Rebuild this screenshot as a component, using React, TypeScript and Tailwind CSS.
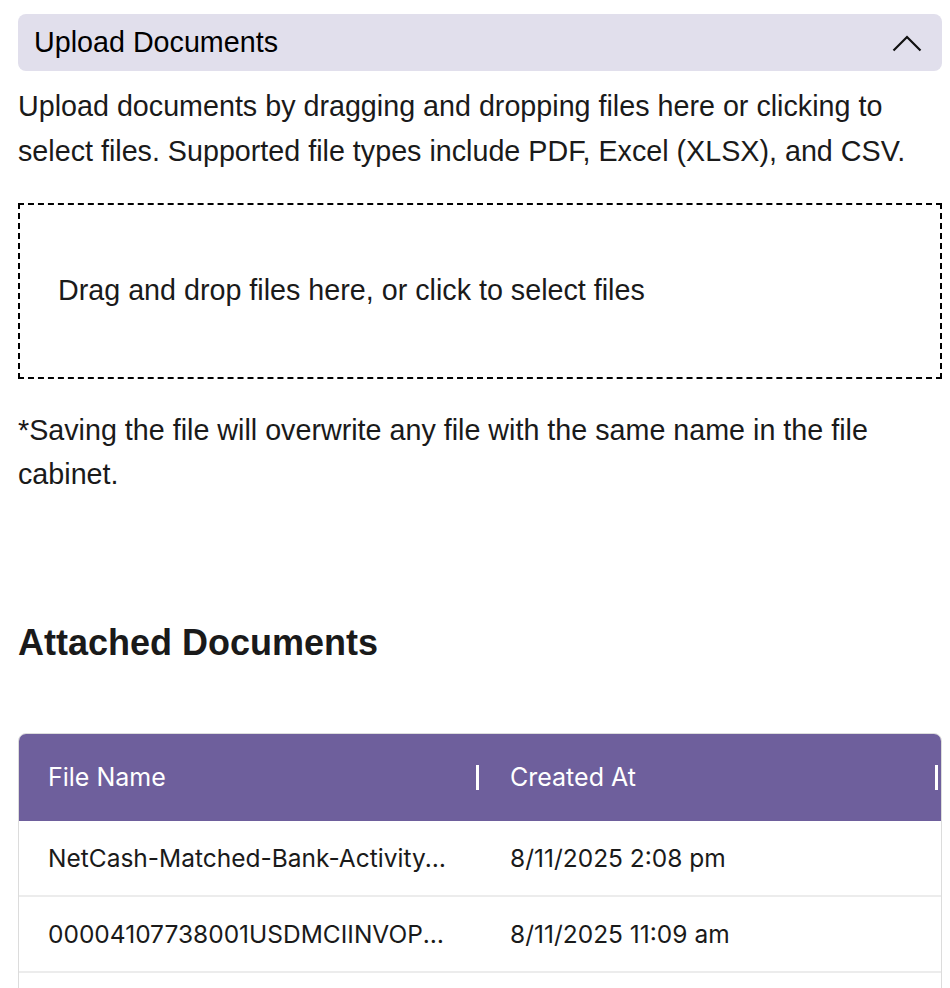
import React from "react";

const rows = [
  { name: "NetCash-Matched-Bank-Activity-Report-2025-08-11.xlsx", created: "8/11/2025 2:08 pm" },
  { name: "00004107738001USDMCIINVOPEN20250811.csv", created: "8/11/2025 11:09 am" },
  { name: "Statement-Summary.pdf", created: "8/10/2025 4:15 pm" },
];

export default function App() {
  return (
    <div className="min-h-[988px] bg-white px-[18px] pt-[14px] pr-[8px] text-black [font-family:'Liberation_Sans',Arial,sans-serif]">
      <div className="flex h-[57px] items-center justify-between rounded-[8px] bg-[#e1dfec] pl-[16px] pr-[20px]">
        <span className="text-[28.7px]">Upload Documents</span>
        <svg width="30" height="18" viewBox="0 0 30 18" fill="none">
          <path d="M1.5 16.5 L15 3 L28.5 16.5" stroke="#111" strokeWidth="2.2" />
        </svg>
      </div>
      <p className="mt-[13px] text-[28.7px] leading-[45px] text-[#1a1a1a]">
        Upload documents by dragging and dropping files here or clicking to select files. Supported file types include PDF, Excel (XLSX), and CSV.
      </p>
      <div className="mt-[29px] flex h-[176px] items-center border-2 border-dashed border-black pl-[38px]">
        <span className="text-[28.7px] text-[#1a1a1a]">Drag and drop files here, or click to select files</span>
      </div>
      <p className="mt-[29px] text-[28.7px] leading-[44px] text-[#1a1a1a]">
        *Saving the file will overwrite any file with the same name in the file cabinet.
      </p>
      <h2 className="mt-[127px] text-[36px] font-bold leading-[40px] text-[#1a1a1a]">Attached Documents</h2>
      <div className="mt-[70px] overflow-hidden rounded-t-[8px] border border-[#dcdcdc] [font-family:Inter,'Noto_Sans',sans-serif]">
        <div className="flex h-[87px] items-center bg-[#6e5f9c] text-[25px] text-white">
          <div className="flex w-[460px] items-center justify-between pl-[29px]">
            <span>File Name</span>
            <span className="h-[25px] w-[3px] bg-white" />
          </div>
          <div className="flex flex-1 items-center justify-between pl-[31px] pr-[3px]">
            <span>Created At</span>
            <span className="h-[25px] w-[3px] bg-white" />
          </div>
        </div>
        {rows.map((r, i) => (
          <div key={i} className="flex h-[76px] items-center border-b-2 border-[#ececec] text-[24.5px] text-[#1a1a1a] first:border-b">
            <div className="w-[460px] truncate pl-[29px] pr-[30px]">{r.name}</div>
            <div className="flex-1 pl-[31px]">{r.created}</div>
          </div>
        ))}
      </div>
    </div>
  );
}
